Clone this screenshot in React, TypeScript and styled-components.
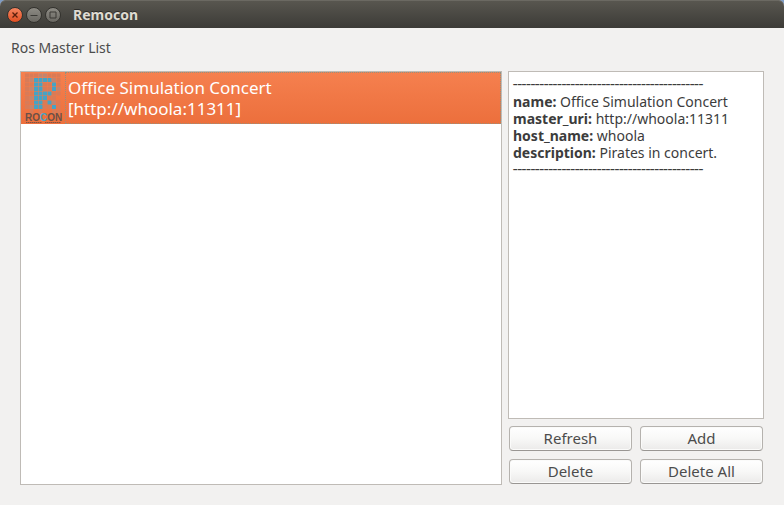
import React, { useState } from 'react';
import styled, { createGlobalStyle, css } from 'styled-components';

const GlobalStyle = createGlobalStyle`
  *, *::before, *::after { box-sizing: border-box; }
  body {
    margin: 0;
    background: #f2f1f0;
    color: #4c4c4c;
    font: 14px/17px 'Noto Sans', 'Open Sans', sans-serif;
  }
  button { font: inherit; color: inherit; padding: 0; }
`;

const Window = styled.div`
  display: flex;
  flex-direction: column;
  min-height: 100vh;
  background: #f2f1f0;
`;

const TitleBar = styled.header`
  display: flex;
  align-items: center;
  gap: 3px;
  height: 28px;
  padding: 1px 7px 0;
  border-radius: 6px 6px 0 0;
  background: linear-gradient(#595750, #3c3b37);
  box-shadow: inset 0 1px #6b6962, 0 -8px 0 8px #7f9cc4;
  clip-path: inset(0);
`;

const Title = styled.h1`
  margin: 0 0 0 9px;
  color: #dfdbd2;
  font-size: 14px;
  line-height: 20px;
  text-shadow: 0 -1px #2c2b28;
`;

const WindowButton = styled.button<{ $close?: boolean }>`
  display: grid;
  place-items: center;
  width: 16px;
  height: 16px;
  border: 1px solid #33322e;
  border-radius: 50%;
  background: linear-gradient(#8d8b84, #6a6862);
  color: #3a3935;
  ${(p) =>
    p.$close &&
    css`
      background: linear-gradient(#f58560, #e24f22);
      color: #5a1f0c;
    `}
`;

const Content = styled.main`
  flex: 1;
  display: flex;
  flex-direction: column;
  padding: 10px 20px 20px;
`;

const Heading = styled.h2`
  margin: 0 -9px 13px;
  font-size: 14px;
  font-weight: 400;
  line-height: 20px;
`;

const Columns = styled.div`
  flex: 1;
  display: flex;
  gap: 6px;
`;

const panel = css`
  border: 1px solid #bfbbb6;
  background: #fff;
`;

const MasterList = styled.ul`
  ${panel}
  flex: 1;
  min-width: 0;
  margin: 0;
  padding: 0;
  list-style: none;
`;

const MasterRow = styled.button<{ $selected: boolean }>`
  display: flex;
  width: 100%;
  height: 52px;
  border: 0;
  background: ${(p) => (p.$selected ? 'linear-gradient(#f5804f, #ec6f3c)' : '#fff')};
  color: ${(p) => (p.$selected ? '#fff' : '#3c3c3c')};
  text-align: left;
  outline: 0;
`;

const MasterText = styled.span`
  flex: 1;
  padding: 4px 2px;
  border: 1px dotted #94907f;
  font-size: 17px;
  line-height: 21px;
`;

const Line = styled.span`
  display: block;
`;

const Side = styled.aside`
  display: flex;
  flex-direction: column;
  gap: 7px;
  width: 256px;
`;

const Details = styled.section`
  ${panel}
  flex: 1;
  padding: 4px;
  color: #3c3c3c;
`;

const Rule = styled.p`
  margin: 0;
  font-family: Roboto, sans-serif;
  font-size: 16px;
  line-height: 17px;
  white-space: nowrap;
`;

const Field = styled.p`
  margin: 0;
`;

const Actions = styled.div`
  display: grid;
  grid-template-columns: 1fr 1fr;
  gap: 8px;
  padding: 0 1px 1px;
`;

const Action = styled.button`
  height: 25px;
  padding-bottom: 2px;
  border: 1px solid #b5b2ae;
  border-bottom-color: #999693;
  border-radius: 4px;
  background: linear-gradient(#fff, #f8f8f7 50%, #ebeae9);
  box-shadow: inset 0 0 0 1px #fbfbfa;
  font-size: 15px;
  line-height: 20px;
`;

const LogoArt = styled.svg`
  flex: none;
  display: block;
`;

const DOTS = [
  'mmmnnmmm',
  'mnBBBBnm',
  'mmBBmmBm',
  'mnBBmmBn',
  'mmBBBBmm',
  'mnBBBmm.',
  'mmBBmBnm',
  'mnBBmmBm',
  '.m.m..mm',
];

const dotColour: Record<string, string> = { B: '#45a3c6', m: '#d97b57', n: '#c28570' };

function Logo() {
  return (
    <LogoArt width="44" height="52" viewBox="0 0 44 52" role="img" aria-label="Rocon">
      {DOTS.flatMap((row, y) =>
        [...row].map((c, x) =>
          c === '.' ? null : (
            <rect
              key={`${x}-${y}`}
              x={4 + x * 4.5}
              y={1.5 + y * 4.5}
              width="4"
              height="4"
              fill={dotColour[c]}
            />
          ),
        ),
      )}
      <text x="4" y="49" fontFamily="Liberation Sans, sans-serif" fontWeight="700" fontSize="10" fill="#6a5048">
        RO<tspan fill="#45a3c6">C</tspan>ON
      </text>
      <path d="M5 50.5H21M24 50.5H40" stroke="#7d5546" strokeDasharray="1.5 .5" />
    </LogoArt>
  );
}

const masters = [
  {
    name: 'Office Simulation Concert',
    uri: 'http://whoola:11311',
    host: 'whoola',
    description: 'Pirates in concert.',
  },
];

const DASHES = '-'.repeat(43);

export default function App() {
  const [selected, setSelected] = useState(0);
  const master = masters[selected];

  return (
    <>
      <GlobalStyle />
      <Window>
        <TitleBar>
          <WindowButton $close aria-label="Close">
            <svg width="8" height="8" viewBox="0 0 8 8">
              <path d="M1.5 1.5l5 5m0-5l-5 5" stroke="currentColor" strokeWidth="1.3" />
            </svg>
          </WindowButton>
          <WindowButton aria-label="Minimize">
            <svg width="8" height="8" viewBox="0 0 8 8">
              <path d="M.5 4.5h7" stroke="currentColor" />
            </svg>
          </WindowButton>
          <WindowButton aria-label="Maximize">
            <svg width="8" height="8" viewBox="0 0 8 8">
              <path d="M1 1h6v6h-6z" fill="none" stroke="currentColor" />
            </svg>
          </WindowButton>
          <Title>Remocon</Title>
        </TitleBar>
        <Content>
          <Heading>Ros Master List</Heading>
          <Columns>
            <MasterList>
              {masters.map((m, i) => (
                <li key={m.uri}>
                  <MasterRow $selected={i === selected} onClick={() => setSelected(i)}>
                    <Logo />
                    <MasterText>
                      <Line>{m.name}</Line>
                      <Line>[{m.uri}]</Line>
                    </MasterText>
                  </MasterRow>
                </li>
              ))}
            </MasterList>
            <Side>
              <Details>
                <Rule>{DASHES}</Rule>
                <Field><b>name:</b> {master.name}</Field>
                <Field><b>master_uri:</b> {master.uri}</Field>
                <Field><b>host_name:</b> {master.host}</Field>
                <Field><b>description:</b> {master.description}</Field>
                <Rule>{DASHES}</Rule>
              </Details>
              <Actions>
                <Action>Refresh</Action>
                <Action>Add</Action>
                <Action>Delete</Action>
                <Action>Delete All</Action>
              </Actions>
            </Side>
          </Columns>
        </Content>
      </Window>
    </>
  );
}
